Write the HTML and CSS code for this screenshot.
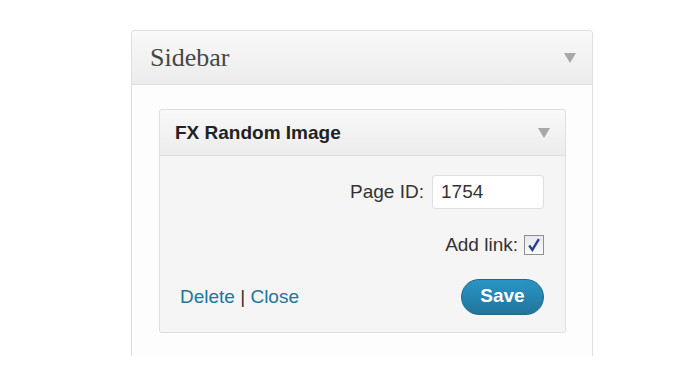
FILE: index.html
```html
<!DOCTYPE html>
<html lang="en">
<head>
    <meta charset="UTF-8">
    <title>Sidebar Widget</title>
    <link rel="stylesheet" href="styles.css">
</head>
<body>

<div class="sidebar">
    <div class="sidebar-head">
        <h2>Sidebar</h2>
        <span class="arrow"></span>
    </div>

    <div class="sidebar-body">
        <!-- Widget -->
        <div class="widget">
            <div class="widget-head">
                <h3>FX Random Image</h3>
                <span class="arrow"></span>
            </div>
            <div class="widget-body">
                <div class="row">
                    <label for="pageId">Page ID:</label>
                    <input type="text" id="pageId" value="1754">
                </div>
                <div class="row row-check">
                    <label>Add link:</label>
                    <span class="check">
                        <svg width="14" height="14" viewBox="0 0 13 13"><path d="M2 7 L5 11 L11 1" fill="none" stroke="#2b3f8f" stroke-width="2.2"/></svg>
                    </span>
                </div>
                <div class="row row-actions">
                    <div class="links">
                        <a href="#">Delete</a> | <a href="#">Close</a>
                    </div>
                    <button class="button">Save</button>
                </div>
            </div>
        </div>
    </div>
</div>

</body>
</html>
```

FILE: styles.css
```css
body {
    margin: 0;
    background: #fff;
    font-family: "Liberation Sans", Arial, sans-serif;
    font-size: 19px;
    color: #333;
}
.sidebar {
    width: 460px;
    height: 325px;
    margin: 30px 0 0 131px;
    border: 1px solid #dfdfdf;
    border-bottom: none;
    border-radius: 4px 4px 0 0;
    background: #fdfdfd;
}
.sidebar-head {
    height: 53px;
    display: flex;
    align-items: center;
    justify-content: space-between;
    padding: 0 16px 0 18px;
    background: linear-gradient(#f9f9f9, #ececec);
    border-bottom: 1px solid #dfdfdf;
    border-radius: 4px 4px 0 0;
}
.sidebar-head h2 {
    margin: 0;
    font-family: "Liberation Serif", "Times New Roman", serif;
    font-weight: normal;
    font-size: 26px;
    color: #464646;
}
.arrow {
    width: 0;
    height: 0;
    border-left: 6px solid transparent;
    border-right: 6px solid transparent;
    border-top: 10px solid #a8a8a8;
}
.sidebar-body {
    padding: 24px 26px 0 27px;
}
.widget {
    border: 1px solid #dfdfdf;
    border-radius: 3px;
    background: #f5f5f5;
}
.widget-head {
    height: 45px;
    display: flex;
    align-items: center;
    justify-content: space-between;
    padding: 0 15px 0 15px;
    background: linear-gradient(#f9f9f9, #ececec);
    border-bottom: 1px solid #dfdfdf;
    border-radius: 3px 3px 0 0;
}
.widget-head h3 {
    margin: 0;
    font-size: 19px;
    color: #222;
}
.widget-body {
    padding: 19px 21px 17px 20px;
}
.row {
    display: flex;
    justify-content: flex-end;
    align-items: center;
    gap: 8px;
}
.row input {
    width: 94px;
    height: 32px;
    padding: 0 8px;
    border: 1px solid #dfdfdf;
    border-radius: 3px;
    background: #fff;
    font-family: inherit;
    font-size: 19px;
    color: #333;
}
.row-check {
    margin-top: 25px;
    gap: 6px;
}
.check {
    width: 18px;
    height: 18px;
    border: 1px solid #8f8f8f;
    background: linear-gradient(#e8e8ee, #fafafa);
    display: flex;
    align-items: center;
    justify-content: center;
}
.row-actions {
    margin-top: 23px;
    justify-content: space-between;
}
.links a {
    color: #21759b;
    text-decoration: none;
}
.button {
    width: 83px;
    height: 36px;
    border: 1px solid #1e6a8d;
    border-radius: 18px;
    background: linear-gradient(#2a95c5, #21759b);
    color: #fff;
    font-family: inherit;
    font-weight: bold;
    font-size: 19px;
    padding: 0 0 3px;
}
```
